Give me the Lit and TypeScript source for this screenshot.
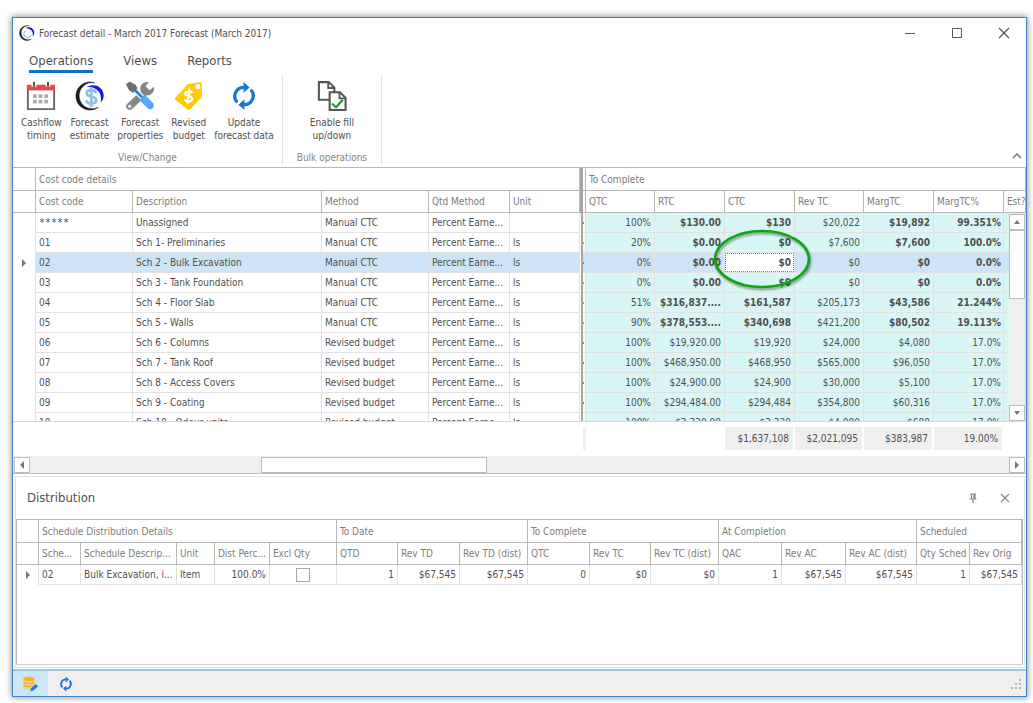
import { LitElement, html, css, svg, nothing } from "lit";
import { customElement, property, state } from "lit/decorators.js";
import { classMap } from "lit/directives/class-map.js";

const PERCENT_EARNED = "Percent Earne...";

interface CostRow {
  code: string;
  description: string;
  method: string;
  unit: string;
  mark: string;
  values: string[];
  bold: boolean;
}

const costRow = (
  code: string,
  description: string,
  method: string,
  unit: string,
  mark: string,
  bold: boolean,
  ...values: string[]
): CostRow => ({ code, description, method, unit, mark, bold, values });

const COST_ROWS: CostRow[] = [
  costRow("*****", "Unassigned", "Manual CTC", "", "blue", true, "100%", "$130.00", "$130", "$20,022", "$19,892", "99.351%"),
  costRow("01", "Sch 1- Preliminaries", "Manual CTC", "ls", "pink", true, "20%", "$0.00", "$0", "$7,600", "$7,600", "100.0%"),
  costRow("02", "Sch 2 - Bulk Excavation", "Manual CTC", "ls", "blue", true, "0%", "$0.00", "$0", "$0", "$0", "0.0%"),
  costRow("03", "Sch 3 - Tank Foundation", "Manual CTC", "ls", "pink", true, "0%", "$0.00", "$0", "$0", "$0", "0.0%"),
  costRow("04", "Sch 4 - Floor Slab", "Manual CTC", "ls", "pink", true, "51%", "$316,837....", "$161,587", "$205,173", "$43,586", "21.244%"),
  costRow("05", "Sch 5 - Walls", "Manual CTC", "ls", "pink", true, "90%", "$378,553....", "$340,698", "$421,200", "$80,502", "19.113%"),
  costRow("06", "Sch 6 - Columns", "Revised budget", "ls", "blue", false, "100%", "$19,920.00", "$19,920", "$24,000", "$4,080", "17.0%"),
  costRow("07", "Sch 7 - Tank Roof", "Revised budget", "ls", "blue", false, "100%", "$468,950.00", "$468,950", "$565,000", "$96,050", "17.0%"),
  costRow("08", "Sch 8 - Access Covers", "Revised budget", "ls", "blue", false, "100%", "$24,900.00", "$24,900", "$30,000", "$5,100", "17.0%"),
  costRow("09", "Sch 9 - Coating", "Revised budget", "ls", "blue", false, "100%", "$294,484.00", "$294,484", "$354,800", "$60,316", "17.0%"),
  costRow("10", "Sch 10 - Odour units", "Revised budget", "ls", "blue", false, "100%", "$3,320.00", "$3,320", "$4,000", "$680", "17.0%"),
];

const COST_COLUMNS = ["marker", "code", "description", "method", "qtd", "unit", "split", "sliver", "amount", "money", "money", "amount", "money", "money", "est"];
const DIST_COLUMNS = [22, 42, 0, 38, 55, 67, 61, 62, 68, 62, 61, 68, 63, 64, 71, 53, 52];

const ringIcon = (dollar: boolean) => svg`
  <path d="M21 1.900A15 15 0 1 0 25 28A14 14 0 1 1 21 1.900Z" fill="#1b1b1b" stroke="#1b1b1b" stroke-width=".6"/>
  <path d="M12.500 6.500C20 2 29.500 6 30.500 14C31 18 29.800 20.500 27.500 22.800C28.500 15.500 26.500 10.500 21 8C18.500 6.800 15.500 6.200 12.500 6.500Z" fill="#1414f0"/>
  ${dollar
    ? svg`<path d="M22.300 13C21.500 10.500 19.500 9.600 17.200 9.600C14.200 9.600 12.500 11 12.500 13C12.500 18 22.500 15.200 22.500 20.300C22.500 22.700 20.500 24 17.400 24C14.500 24 12.500 22.900 11.800 20.600M17.400 6V28" fill="none" stroke="#92c2e0" stroke-width="3"/>`
    : svg`<path d="M14 11A7.500 7.500 0 1 0 24.500 19" fill="none" stroke="#9cc9e8" stroke-width="2.600"/>`}
`;

const ICONS = {
  calendar: svg`
    <path d="M2 7H30V30H2Z" fill="#fff" stroke="#666" stroke-width="2"/>
    <path d="M1 4H31V10H1Z" fill="#f04545"/>
    <path d="M6 1h5v5H6zM21 1h5v5h-5z" fill="#fff"/>
    <path d="M8.500 1V6M23.500 1V6" stroke="#555" stroke-width="2.200"/>
    <path d="M7.500 14h4v4h-4zM13.500 14h4v4h-4zM19.500 14h4v4h-4zM7.500 20h4v4h-4zM13.500 20h4v4h-4zM19.500 20h4v4h-4z" fill="#a9a9a9"/>`,
  estimate: ringIcon(true),
  logo: ringIcon(false),
  tools: svg`
    <path d="M21 12L5 27" stroke="#858585" stroke-width="7.500" stroke-linecap="round"/>
    <circle cx="5" cy="27" r="1.600" fill="#fff"/>
    <path d="M16.500 10C15.500 4 20 .3 25.500 1.300L21.800 5.500L26.200 9.800L30.800 6C31.800 11.500 28 16 22 15Z" fill="#858585"/>
    <path d="M1 3.500L5 .5L11.500 4.200L14.300 9.800L10.300 13.300L4.500 10Z" fill="#6e6e6e"/>
    <path d="M11 10L20 19" stroke="#fff" stroke-width="5.500"/>
    <path d="M10 9L19 18" stroke="#2b7cc4" stroke-width="3"/>
    <path d="M15 20L21 14.500L30.300 24C32.300 27.500 28.500 32 24.800 29.500Z" fill="#55aaff"/>`,
  tag: svg`
    <path d="M1 18L13.500 4.500Q15 3 17 3L27 1.200Q30 1 30 4L29.700 14.500Q29.700 16.500 28.500 18L17.500 29.800Q15.800 31.500 14 29.800L1.600 20Q.5 19 1 18Z" fill="#ffcb05"/>
    <circle cx="25.500" cy="6" r="2.700" fill="#fff"/>
    <path d="M19.800 12.700C18.800 10.700 11.800 10 11.900 13.700C12 17.200 19.300 15 19.400 19C19.500 22.600 13 22.600 11.200 19.600M16.700 8.300L14.200 24" fill="none" stroke="#fff" stroke-width="2.300"/>`,
  refresh: svg`
    <path d="M16.500 6.800A9.500 9.500 0 0 0 8.800 22.800M15.500 25.200A9.500 9.500 0 0 0 23.200 9.200" fill="none" stroke="#1677d8" stroke-width="3.600"/>
    <path d="M15.500 1L22 6.800L15.500 12.500ZM16.500 19.500L10 25.200L16.500 31Z" fill="#1677d8"/>`,
  fill: svg`
    <path d="M2 1.200H12.500L18.500 7V20H2Z" fill="#fff" stroke="#555" stroke-width="2.200"/>
    <path d="M12 1.500V7.500H18.500" fill="none" stroke="#555" stroke-width="2"/>
    <path d="M13.500 12H24.500L30.500 18V31H13.500Z" fill="#fff" stroke="#555" stroke-width="2.200"/>
    <path d="M24 12V18.500H30.500" fill="none" stroke="#555" stroke-width="2"/>
    <path d="M16 24L20.300 28L27.500 20" fill="none" stroke="#0ba22b" stroke-width="2.200"/>`,
  database: svg`
    <path d="M1 5C1 0 23 0 23 5V24C20 28 3 27 1 23Z" fill="#fbb021"/>
    <path d="M1 9C4 13 20 13 23 9M1 15C4 19 20 19 23 15M1 21C4 25 16 25 18 23.500" fill="none" stroke="#e9efe8" stroke-width="1.700"/>
    <path d="M13.500 31L15 25L25.500 15.500L31 20.500L20 30Z" fill="#1f75c9" stroke="#cde6f7" stroke-width="1.500"/>`,
};

const icon = (name: keyof typeof ICONS, size: string) =>
  html`<svg class=${size} viewBox="0 0 32 32" aria-hidden="true">${ICONS[name]}</svg>`;

const arrow = (d: string) =>
  html`<svg class="arrow" viewBox="0 0 8 8" aria-hidden="true"><path d=${d} fill="#777"></path></svg>`;

const UP = "M1 6L4 2L7 6Z";
const DOWN = "M1 2L4 6L7 2Z";
const LEFT = "M6 0L2 4L6 8Z";
const RIGHT = "M2 0L6 4L2 8Z";

const base = css`
  :host {
    display: block;
    box-sizing: border-box;
    font-family: "DejaVu Sans Condensed", "Noto Sans", sans-serif;
    font-size: 10px;
    line-height: 13px;
    color: #505050;
  }
  * {
    box-sizing: border-box;
  }
  button {
    font: inherit;
    color: inherit;
    background: none;
    border: 0;
    padding: 0;
    margin: 0;
  }
  svg {
    display: block;
    flex: none;
  }
  .arrow {
    width: 8px;
    height: 8px;
  }
  table {
    width: 100%;
    table-layout: fixed;
    border-collapse: separate;
    border-spacing: 0;
  }
  th,
  td {
    padding: 0 3px;
    white-space: nowrap;
    overflow: hidden;
    border: 0 solid #e2e2e2;
    border-right-width: 1px;
    border-bottom-width: 1px;
  }
  th {
    font-weight: normal;
    text-align: left;
    color: #7d7d7d;
    border-color: #b8b8b8;
    height: 22px;
  }
  .bands th {
    height: 23px;
  }
  td {
    height: 20px;
  }
  .num {
    text-align: right;
  }
  .marker {
    border-bottom-color: transparent;
  }
  .marker .arrow {
    margin: 0 auto;
  }
`;

@customElement("ribbon-bar")
class RibbonBar extends LitElement {
  @state() private tab = "Operations";

  static styles = [
    base,
    css`
      .tabs {
        display: flex;
        gap: 30px;
        padding: 4px 16px 3px;
        font-size: 13px;
        line-height: 18px;
      }
      .tab {
        height: 21px;
        border-bottom: 3px solid transparent;
      }
      .tab.active {
        border-color: #1270bf;
      }
      .groups {
        display: flex;
        height: 92px;
        border-bottom: 1px solid #b8b8b8;
      }
      .group {
        display: flex;
        flex-direction: column;
        gap: 1px;
        padding-bottom: 3px;
      }
      .items,
      .caption {
        border-right: 1px solid #e2e2e2;
      }
      .items {
        display: flex;
        gap: 8px;
        height: 73px;
        padding: 5px 8px 0;
      }
      .caption {
        flex: 1;
        text-align: center;
        color: #858585;
        padding-top: 3px;
      }
      .item {
        display: flex;
        flex-direction: column;
        align-items: center;
        gap: 5px;
        white-space: pre;
      }
      .large {
        width: 30px;
        height: 30px;
      }
      .wide {
        padding: 0 19px;
      }
      .collapse {
        margin: auto 4px 7px auto;
      }
      .chevron {
        width: 10px;
        height: 8px;
      }
    `,
  ];

  private item(name: keyof typeof ICONS, label: string, wide = false) {
    return html`<button class=${classMap({ item: true, wide })}>${icon(name, "large")}<span>${label}</span></button>`;
  }

  render() {
    return html`
      <div class="tabs" role="tablist">
        ${["Operations", "Views", "Reports"].map(
          (name) => html`<button
            role="tab"
            aria-selected=${name === this.tab}
            class=${classMap({ tab: true, active: name === this.tab })}
            @click=${() => (this.tab = name)}
          >${name}</button>`
        )}
      </div>
      <div class="groups">
        <div class="group">
          <div class="items">
            ${this.item("calendar", "Cashflow\ntiming")}${this.item("estimate", "Forecast\nestimate")}
            ${this.item("tools", "Forecast\nproperties")}${this.item("tag", "Revised\nbudget")}
            ${this.item("refresh", "Update\nforecast data")}
          </div>
          <div class="caption">View/Change</div>
        </div>
        <div class="group">
          <div class="items">${this.item("fill", "Enable fill\nup/down", true)}</div>
          <div class="caption">Bulk operations</div>
        </div>
        <button class="collapse" aria-label="Collapse ribbon">
          <svg class="chevron" viewBox="0 0 10 8"><path d="M1 6L5 2L9 6" fill="none" stroke="#777" stroke-width="1.500" /></svg>
        </button>
      </div>
    `;
  }
}

@customElement("cost-grid")
class CostGrid extends LitElement {
  @property() selected = "02";

  static styles = [
    base,
    css`
      .view {
        position: relative;
        height: 254px;
        overflow: hidden;
        border-bottom: 1px solid #d9d9d9;
      }
      .c-marker { width: 23px; }
      .c-code { width: 97px; }
      .c-method { width: 107px; }
      .c-qtd { width: 81px; }
      .c-unit { width: 70px; }
      .c-split { width: 3px; }
      .c-sliver { width: 3px; }
      .c-money { width: 70px; }
      .c-amount { width: 69px; }
      .c-est { width: 22px; }
      .masked {
        font-family: "DejaVu Sans Mono", monospace;
      }
      .split {
        background: #a6a6a6;
        border: 0;
        padding: 0;
      }
      td.split {
        border-left: 1px solid #fff;
      }
      .sliver {
        padding: 0;
        background: #fffde8;
      }
      th.sliver {
        background: #fff;
      }
      .mark {
        width: 1px;
        height: 2px;
        background: #4f86d8;
      }
      .mark.pink {
        background: #f05bb5;
      }
      .teal {
        background: #d8f6f6;
      }
      .bold {
        font-weight: bold;
      }
      .selected td:not(.marker):not(.split) {
        background: #cce4f6;
      }
      .last {
        padding-right: 2px;
      }
      .edit {
        position: relative;
        overflow: visible;
        padding: 0;
      }
      .field {
        display: block;
        width: 100%;
        height: 19px;
        margin: 0;
        padding: 0 2px;
        border: 1px dotted #777;
        outline: 0;
        background: #fff;
        font: inherit;
        color: inherit;
        text-align: right;
      }
      .callout {
        position: absolute;
        z-index: 2;
        left: -14px;
        top: -25px;
        width: 104px;
        height: 66px;
        overflow: visible;
        pointer-events: none;
        filter: drop-shadow(1px 2px 1px #0006);
      }
      .vscroll {
        position: absolute;
        right: 1px;
        top: 46px;
        bottom: 0;
        width: 16px;
        display: flex;
        flex-direction: column;
        background: #efefef;
      }
      .step {
        display: grid;
        place-items: center;
        width: 16px;
        height: 16px;
        background: #fff;
        border: 1px solid #bdbdbd;
      }
      .vthumb {
        height: 69px;
        background: #fff;
        border: 1px solid #bdbdbd;
      }
      .vscroll .step:last-child {
        margin-top: auto;
      }
      .totals {
        padding: 5px 0 6px;
      }
      .totals td {
        height: 23px;
        border: 0 solid #fff;
        border-right-width: 2px;
        padding-right: 4px;
      }
      .totals .fill {
        background: #efefef;
      }
      .totals td.bare {
        padding: 0;
        border: 0;
      }
      .hscroll {
        display: flex;
        height: 18px;
        padding: 1px 1px 1px;
        background: #efefef;
        border-bottom: 1px solid #bdbdbd;
      }
      .hthumb {
        width: 226px;
        height: 16px;
        background: #fff;
        border: 1px solid #bdbdbd;
      }
      .before {
        flex: 231;
      }
      .after {
        flex: 522;
      }
    `,
  ];

  private columns() {
    return html`<colgroup>${COST_COLUMNS.map((name) => html`<col class="c-${name}" />`)}</colgroup>`;
  }

  private row(row: CostRow) {
    const selected = row.code === this.selected;
    return html`<tr class=${classMap({ selected })}>
      <td class="marker">${selected ? arrow(RIGHT) : nothing}</td>
      <td class=${classMap({ masked: row.code.startsWith("*") })}>${row.code}</td>
      <td>${row.description}</td>
      <td>${row.method}</td>
      <td>${PERCENT_EARNED}</td>
      <td>${row.unit}</td>
      <td class="split"></td>
      <td class="sliver"><div class="mark ${row.mark}"></div></td>
      ${row.values.map((value, i) => {
        const bold = row.bold && i !== 0 && i !== 3;
        if (selected && i === 2) {
          return html`<td class="edit bold">
            <input class="field" aria-label="CTC" .value=${value} />
            <svg class="callout" viewBox="0 0 104 66" aria-hidden="true">
              <ellipse cx="51" cy="31" rx="47" ry="28" fill="none" stroke="#09a90d" stroke-width="2.600"></ellipse>
            </svg>
          </td>`;
        }
        return html`<td class=${classMap({ num: true, teal: true, bold, last: i === 5 })}>${value}</td>`;
      })}
      <td class="teal"></td>
    </tr>`;
  }

  render() {
    return html`
      <div class="view">
        <table>
          ${this.columns()}
          <thead>
            <tr class="bands">
              <th></th>
              <th colspan="5">Cost code details</th>
              <th class="split"></th>
              <th class="sliver"></th>
              <th colspan="7">To Complete</th>
            </tr>
            <tr>
              <th></th>
              ${["Cost code", "Description", "Method", "Qtd Method", "Unit"].map((name) => html`<th>${name}</th>`)}
              <th class="split"></th>
              <th class="sliver"></th>
              ${["QTC", "RTC", "CTC", "Rev TC", "MargTC", "MargTC%", "Est?"].map((name) => html`<th>${name}</th>`)}
            </tr>
          </thead>
          <tbody>${COST_ROWS.map((row) => this.row(row))}</tbody>
        </table>
        <div class="vscroll">
          <button class="step" aria-label="Scroll up">${arrow(UP)}</button>
          <div class="vthumb"></div>
          <button class="step" aria-label="Scroll down">${arrow(DOWN)}</button>
        </div>
      </div>
      <div class="totals">
        <table>
          ${this.columns()}
          <tbody>
            <tr>
              <td class="bare" colspan="7"></td>
              <td class="fill bare"></td>
              <td class="bare" colspan="2"></td>
              ${["$1,637,108", "$2,021,095", "$383,987", "19.00%"].map((v) => html`<td class="num fill">${v}</td>`)}
              <td class="bare"></td>
            </tr>
          </tbody>
        </table>
      </div>
      <div class="hscroll">
        <button class="step" aria-label="Scroll left">${arrow(LEFT)}</button>
        <div class="before"></div>
        <div class="hthumb"></div>
        <div class="after"></div>
        <button class="step" aria-label="Scroll right">${arrow(RIGHT)}</button>
      </div>
    `;
  }
}

@customElement("distribution-panel")
class DistributionPanel extends LitElement {
  static styles = [
    base,
    css`
      :host {
        display: flex;
        flex-direction: column;
        margin: 2px 1px 0 2px;
        border: 1px solid #e2e2e2;
      }
      .head {
        display: flex;
        align-items: center;
        gap: 22px;
        height: 42px;
        padding: 0 14px 0 11px;
      }
      .title {
        margin: 0 auto 0 0;
        font-size: 13px;
        line-height: 18px;
        font-weight: normal;
      }
      .glyph {
        width: 10px;
        height: 10px;
      }
      .body {
        flex: 1;
        margin: 0 1px 2px 0;
        border: 1px solid #b8b8b8;
        border-bottom: 1px solid #cfcfcf;
      }
      .center {
        padding: 0;
      }
      .check {
        appearance: none;
        display: block;
        width: 14px;
        height: 14px;
        margin: 0 auto;
        border: 1px solid #aaa;
        background: #fff;
      }
    `,
  ];

  render() {
    return html`
      <div class="head">
        <h2 class="title">Distribution</h2>
        <button aria-label="Pin panel">
          <svg class="glyph" viewBox="0 0 10 10"><path d="M2 1H8M3.500 1V5.500M6 1V5.500M7 1V5.500M1.500 6H8.500M5 6V10" fill="none" stroke="#888" stroke-width="1.200" /></svg>
        </button>
        <button aria-label="Close panel">
          <svg class="glyph" viewBox="0 0 10 10"><path d="M1 1L9 9M9 1L1 9" fill="none" stroke="#888" stroke-width="1.200" /></svg>
        </button>
      </div>
      <div class="body">
        <table>
          <colgroup>
            ${DIST_COLUMNS.map((w) => (w ? html`<col style="width:${w}px" />` : html`<col />`))}
          </colgroup>
          <thead>
            <tr class="bands">
              <th></th>
              <th colspan="5">Schedule Distribution Details</th>
              <th colspan="3">To Date</th>
              <th colspan="3">To Complete</th>
              <th colspan="3">At Completion</th>
              <th colspan="2">Scheduled</th>
            </tr>
            <tr>
              <th></th>
              ${[
                "Sche...", "Schedule Descrip...", "Unit", "Dist Perc...", "Excl Qty", "QTD", "Rev TD", "Rev TD (dist)",
                "QTC", "Rev TC", "Rev TC (dist)", "QAC", "Rev AC", "Rev AC (dist)", "Qty Sched", "Rev Orig",
              ].map((name) => html`<th>${name}</th>`)}
            </tr>
          </thead>
          <tbody>
            <tr>
              <td class="marker">${arrow(RIGHT)}</td>
              <td>02</td>
              <td>Bulk Excavation, i...</td>
              <td>Item</td>
              <td class="num">100.0%</td>
              <td class="center"><input class="check" type="checkbox" aria-label="Excl Qty" /></td>
              ${["1", "$67,545", "$67,545", "0", "$0", "$0", "1", "$67,545", "$67,545", "1", "$67,545"].map(
                (v) => html`<td class="num">${v}</td>`
              )}
            </tr>
          </tbody>
        </table>
      </div>
    `;
  }
}

@customElement("app-root")
class AppRoot extends LitElement {
  static styles = [
    base,
    css`
      :host {
        display: flex;
        min-height: 100vh;
        padding: 17px 6px 6px 12px;
        background: #fff;
      }
      .window {
        flex: 1;
        min-width: 0;
        display: flex;
        flex-direction: column;
        background: #fff;
        border: 1px solid #3a87c8;
        box-shadow: 0 0 6px 1px #0006;
      }
      .titlebar {
        display: flex;
        align-items: center;
        gap: 4px;
        height: 30px;
        padding: 0 16px 0 6px;
      }
      .title {
        margin: 0 auto 0 0;
        font-size: 10px;
        line-height: 13px;
        font-weight: normal;
      }
      .controls {
        display: flex;
        gap: 35px;
      }
      .control {
        width: 12px;
        height: 12px;
      }
      .small {
        width: 16px;
        height: 16px;
      }
      .panel {
        flex: 1;
      }
      .status {
        display: flex;
        align-items: center;
        height: 27px;
        margin-top: 1px;
        background: #efefef;
        border-top: 2px solid #9cc6e4;
      }
      .mode {
        display: grid;
        place-items: center;
        width: 35px;
        height: 25px;
      }
      .mode.active {
        background: #cde6f7;
      }
      .grip {
        width: 12px;
        height: 12px;
        margin: 0 4px 0 auto;
      }
    `,
  ];

  render() {
    const dots = [[8, 0], [4, 4], [8, 4], [0, 8], [4, 8], [8, 8]];
    return html`
      <main class="window">
        <header class="titlebar">
          ${icon("logo", "small")}
          <h1 class="title">Forecast detail - March 2017 Forecast (March 2017)</h1>
          <div class="controls">
            <button aria-label="Minimize"><svg class="control" viewBox="0 0 12 12"><path d="M1 6.500H11" stroke="#555" /></svg></button>
            <button aria-label="Maximize"><svg class="control" viewBox="0 0 12 12"><path d="M1.500 1.500H10.500V10.500H1.500Z" fill="none" stroke="#555" /></svg></button>
            <button aria-label="Close"><svg class="control" viewBox="0 0 12 12"><path d="M1 1L11 11M11 1L1 11" stroke="#555" stroke-width="1.300" /></svg></button>
          </div>
        </header>
        <ribbon-bar></ribbon-bar>
        <cost-grid></cost-grid>
        <distribution-panel class="panel"></distribution-panel>
        <footer class="status">
          <button class="mode active" aria-label="Edit data">${icon("database", "small")}</button>
          <button class="mode" aria-label="Refresh">${icon("refresh", "small")}</button>
          <svg class="grip" viewBox="0 0 12 12" aria-hidden="true">
            ${dots.map(([x, y]) => svg`<rect x=${x + 1} y=${y + 1} width="2" height="2" fill="#b5b5b5"></rect>`)}
          </svg>
        </footer>
      </main>
    `;
  }
}
